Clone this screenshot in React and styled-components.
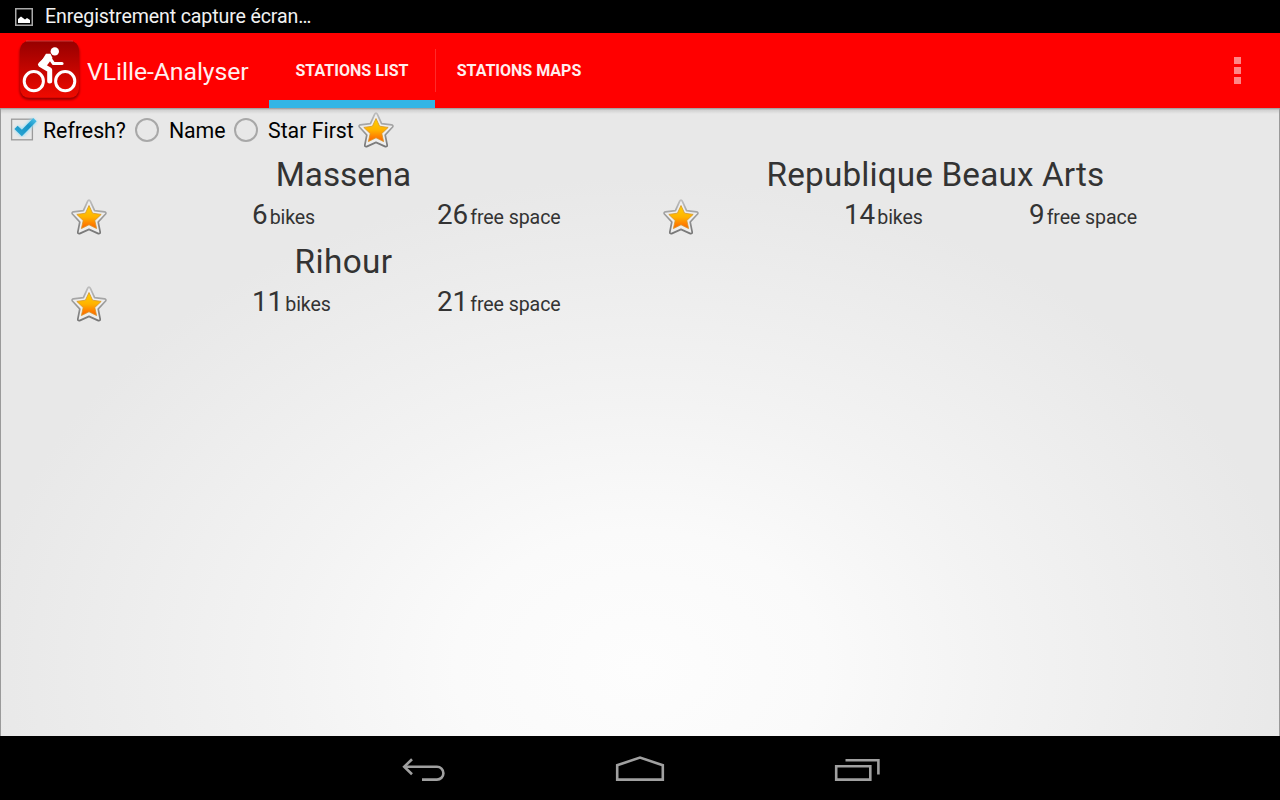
import React from 'react';
import styled, { createGlobalStyle } from 'styled-components';

const GlobalStyle = createGlobalStyle`
  * { box-sizing: border-box; }
  body { margin: 0; background: #000; font-family: Roboto, sans-serif; overflow: hidden; }
  svg { display: block; flex: none; }
`;

const Screen = styled.div`
  width: 1280px;
  height: 800px;
  display: flex;
  flex-direction: column;
`;

const Label = styled.span`
  padding-top: ${(p) => p.$drop || 0}px;
  font-size: ${(p) => p.$size}px;
  font-weight: ${(p) => p.$weight || 400};
  letter-spacing: ${(p) => p.$track || 0}px;
  line-height: 1.2;
  white-space: nowrap;
`;

const StatusBar = styled.header`
  height: 33px;
  padding-left: 15px;
  display: flex;
  align-items: center;
  gap: 12px;
  background: #000;
  color: #f2f2f2;
`;

const ActionBar = styled.div`
  height: 75px;
  padding-left: 15px;
  display: flex;
  background: #f00;
  color: #fff0f0;
`;

const Brand = styled.div`
  width: 254px;
  display: flex;
  align-items: center;
  gap: 4px;
`;

const Tab = styled.button`
  width: ${(p) => p.$width}px;
  border: 0;
  border-bottom: 8px solid ${(p) => (p.$active ? '#33b5e5' : 'transparent')};
  padding: 8px 0 0;
  background: none;
  color: #ffeeee;
  font-family: inherit;
  display: flex;
  align-items: center;
  justify-content: center;
`;

const Divider = styled.div`
  width: 1px;
  height: 43px;
  margin-top: 16px;
  background: #ff2a2a;
`;

const Overflow = styled.div`
  margin: 24px 39px 0 auto;
  display: flex;
  flex-direction: column;
  gap: 3px;
`;

const Dot = styled.i`
  width: 7px;
  height: 7px;
  background: #ff8686;
`;

const Content = styled.main`
  height: 628px;
  border: solid #9a9a9a;
  border-width: 0 1px;
  background:
    linear-gradient(rgba(0, 0, 0, 0.36), rgba(0, 0, 0, 0.1) 2px, rgba(0, 0, 0, 0) 6px) top / 100% 6px no-repeat,
    radial-gradient(ellipse 660px 490px at 639px 560px, #fdfdfd 0%, #fafafa 28%, #f3f3f3 54%, #e8e8e8 100%);
`;

const Filters = styled.div`
  height: 44px;
  padding-left: 8px;
  display: flex;
  align-items: center;
  color: #000;
`;

const Option = styled.label`
  width: ${(p) => p.$width}px;
  display: flex;
  align-items: center;
  gap: ${(p) => p.$gap}px;
`;

const Radio = styled.span`
  width: 24px;
  height: 24px;
  border: 2px solid #a8a8a8;
  border-radius: 50%;
`;

const Stations = styled.section`
  padding-left: 46px;
  display: grid;
  grid-template-columns: 592px 592px;
  grid-auto-rows: 87px;
  color: #333;
`;

const Station = styled.article`
  display: flex;
  flex-direction: column;
`;

const Name = styled.div`
  height: 45px;
  padding: 1px 0 0 1px;
  display: flex;
  align-items: center;
  justify-content: center;
`;

const Details = styled.div`
  height: 39px;
  padding-left: 23px;
  display: grid;
  grid-template-columns: 182px 185px 1fr;
  align-items: center;
`;

const Count = styled.div`
  padding-bottom: 3px;
  display: flex;
  align-items: baseline;
  gap: 2px;
`;

const NavBar = styled.nav`
  height: 64px;
  display: flex;
  justify-content: center;
  gap: 166px;
  background: #000;
`;

const StarIcon = () => (
  <svg width="38" height="38" viewBox="0 0 38 38">
    <defs>
      <linearGradient id="gold" x1="0" y1="0" x2="0" y2="1">
        <stop offset="0" stopColor="#ffd000" />
        <stop offset=".5" stopColor="#ffb300" />
        <stop offset="1" stopColor="#ff6000" />
      </linearGradient>
      <linearGradient id="rim" x1="0" y1="0" x2="0" y2="1">
        <stop offset="0" stopColor="#bdbdbd" />
        <stop offset="1" stopColor="#777" />
      </linearGradient>
    </defs>
    <path d="M19 2.2Q19.8 2.2 20.4 3.4L24.6 12.6 34.8 13.8Q36.6 14.6 35.6 16L28.2 24 30.2 34.2Q30.2 36 28.4 35.6L19 31.4 9.6 35.6Q7.8 36 7.8 34.2L9.8 24 2.4 16Q1.4 14.6 3.2 13.8L13.4 12.6 17.6 3.4Q18.2 2.2 19 2.2Z" fill="#eee" stroke="url(#rim)" strokeWidth="1.7" strokeLinejoin="round" />
    <path d="M19 7.5 22.6 15.2 31.2 16.4 24.8 22.5 26.6 30.6 19 26.8 11.4 30.6 13.2 22.5 6.8 16.4 15.4 15.2Z" fill="url(#gold)" stroke="#d69528" strokeWidth=".8" />
  </svg>
);

const PictureIcon = () => (
  <svg width="18" height="18" viewBox="0 0 18 18">
    <rect x=".75" y=".75" width="16.5" height="16.5" fill="none" stroke="#aaa" strokeWidth="1.5" />
    <path d="M3 15V11L6 8.5 8 10 10 11.5 12 10 15 12V15Z" fill="#fff" />
  </svg>
);

const BikeLogo = () => (
  <svg width="68" height="68" viewBox="0 0 68 68">
    <defs>
      <linearGradient id="tile" x1="0" y1="0" x2="0" y2="1">
        <stop offset="0" stopColor="#960000" />
        <stop offset="1" stopColor="#f00a00" />
      </linearGradient>
      <filter id="soft"><feGaussianBlur stdDeviation="1.3" /></filter>
    </defs>
    <rect x="4.5" y="6" width="60" height="57" rx="9" fill="#700" opacity=".75" filter="url(#soft)" />
    <rect x="5" y="3.8" width="59" height="57" rx="9" fill="url(#tile)" />
    <path d="M11 4H58" stroke="#d64a4a" strokeWidth=".8" />
    <g fill="none" stroke="#fff">
      <circle cx="18.8" cy="44.2" r="9.6" strokeWidth="3" />
      <circle cx="50.2" cy="44.2" r="9.6" strokeWidth="3" />
      <path d="M33.5 20 25.5 27.5 34.7 33V44" strokeWidth="5" strokeLinejoin="round" strokeLinecap="round" />
      <path d="M34 20 38.5 26.5H47" strokeWidth="3.2" strokeLinejoin="round" strokeLinecap="round" />
    </g>
    <path d="M31 16.8 35.5 16.8 37.5 21 31.5 29 24.5 27Z" fill="#fff" />
    <circle cx="39.8" cy="14.4" r="4.2" fill="#fff" />
  </svg>
);

const CheckIcon = () => (
  <svg width="30" height="30" viewBox="0 0 30 30">
    <defs>
      <filter id="glow" x="-30%" y="-30%" width="160%" height="160%"><feGaussianBlur stdDeviation="1.4" /></filter>
      <linearGradient id="tick" x1="0" y1="1" x2="1" y2="0">
        <stop offset="0" stopColor="#29a3d1" />
        <stop offset=".6" stopColor="#1594c6" />
        <stop offset="1" stopColor="#45bce5" />
      </linearGradient>
    </defs>
    <rect x="2.6" y="4.2" width="20.8" height="20.6" fill="none" stroke="#9a9a9a" strokeWidth="1.3" />
    <path d="M7.5 12.5 13 18 25.5 5" fill="none" stroke="#8fdcf7" strokeWidth="6" filter="url(#glow)" />
    <path d="M7 12.4 12.8 18 26 4.6" fill="none" stroke="url(#tick)" strokeWidth="4.6" />
  </svg>
);

const NavIcon = ({ children }) => (
  <svg width="50" height="64" viewBox="0 0 50 64" fill="none" stroke="#a0a0a0" strokeWidth="2.6">{children}</svg>
);

const stations = [
  { name: 'Massena', track: -0.05, bikes: 6, free: 26 },
  { name: 'Republique Beaux Arts', track: 0.14, bikes: 14, free: 9 },
  { name: 'Rihour', track: 0.4, bikes: 11, free: 21 },
];

export default function App() {
  return (
    <Screen>
      <GlobalStyle />
      <StatusBar>
        <PictureIcon />
        <Label $size={19.6} $track={-0.13}>Enregistrement capture écran…</Label>
      </StatusBar>
      <ActionBar>
        <Brand>
          <BikeLogo />
          <Label $size={24.8} $track={-0.07} $drop={3}>VLille-Analyser</Label>
        </Brand>
        <Tab $width={166} $active><Label $size={16} $weight={700} $track={0.04}>STATIONS LIST</Label></Tab>
        <Divider />
        <Tab $width={166}><Label $size={16} $weight={700}>STATIONS MAPS</Label></Tab>
        <Overflow><Dot /><Dot /><Dot /></Overflow>
      </ActionBar>
      <Content>
        <Filters>
          <Option $width={126} $gap={4}><CheckIcon /><Label $size={21.3} $drop={2}>Refresh?</Label></Option>
          <Option $width={99} $gap={10}><Radio /><Label $size={21.3} $drop={2} $track={-0.1}>Name</Label></Option>
          <Option $width={123} $gap={10}><Radio /><Label $size={21.3} $drop={2}>Star First</Label></Option>
          <StarIcon />
        </Filters>
        <Stations>
          {stations.map((s) => (
            <Station key={s.name}>
              <Name><Label $size={33.3} $track={s.track}>{s.name}</Label></Name>
              <Details>
                <StarIcon />
                <Count><Label $size={27.8}>{s.bikes}</Label><Label $size={19.6} $track={-0.1}>bikes</Label></Count>
                <Count><Label $size={27.8}>{s.free}</Label><Label $size={19.6} $track={-0.1}>free space</Label></Count>
              </Details>
            </Station>
          ))}
        </Stations>
      </Content>
      <NavBar>
        <NavIcon>
          <path d="M13 23.2 5.2 30.8 13 38.2" /><path d="M5.4 30.8H38A6.4 6.4 0 0 1 38 43.6H23" />
        </NavIcon>
        <NavIcon><path d="M2.2 43.6V29.2L25 21.6 47.8 29.2V43.6Z" /></NavIcon>
        <NavIcon>
          <path d="M5.2 30.2H39.3V43.6H5.2Z" /><path d="M14.5 24.2H47.4V38.5" />
        </NavIcon>
      </NavBar>
    </Screen>
  );
}
